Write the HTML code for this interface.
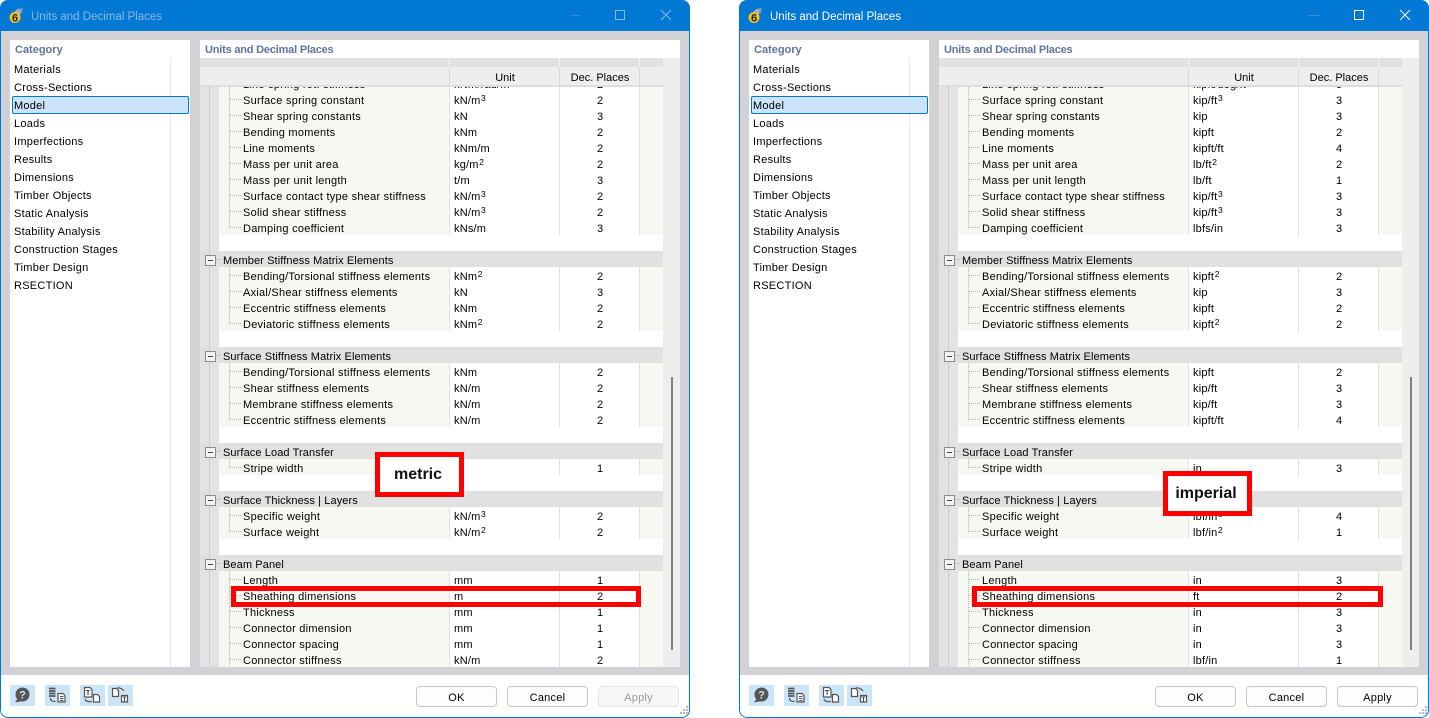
<!DOCTYPE html>
<html><head><meta charset="utf-8"><title>Units and Decimal Places</title>
<style>
*{box-sizing:border-box}
html,body{margin:0;padding:0;width:1429px;height:718px;background:#fff;overflow:hidden;font-family:"Liberation Sans",sans-serif;font-size:11px;color:#000}
.w{position:absolute;top:0;width:690px;height:718px;overflow:hidden;border-radius:8px;background:#d2d1d6}
.a{position:absolute}
.frame{position:absolute;left:0;top:0;width:690px;height:718px;border:1px solid #0078d4;border-radius:8px}
.tb{left:0;top:0;width:690px;height:31px;background:#0078d4}
.tt{left:31px;top:9px;font-size:11.5px;line-height:16px;white-space:nowrap}
.foot{left:0;top:675px;width:690px;height:43px;background:#fff}
.left{left:10px;top:40px;width:180px;height:627px;background:#fff}
.vl{left:160px;top:19px;width:1px;height:608px;background:#e6e6e6}
.cap{color:#62739c;font-weight:bold;font-size:11px;line-height:20px;white-space:nowrap}
.li{position:absolute;left:4px;line-height:20px;height:18px;white-space:nowrap;letter-spacing:.26px}
.sel{left:12px;top:96px;width:177px;height:18px;background:#cce4f9;border:1px solid #0078d4;border-radius:2px}
.right{left:200px;top:40px;width:480px;height:627px;background:#fff}
.strip{left:0;top:18px;width:463px;height:9px;background:#e1e1e1}
.sb{left:463px;top:18px;width:17px;height:609px;background:#eee}
.th{left:471px;top:337px;width:2px;height:273px;background:#808080}
.hd{left:0;top:27px;width:463px;height:20px;background:#eee;border-bottom:2px solid #ddd;line-height:23px}
.hd span{position:absolute;top:0;height:18px;text-align:center}
.sep{top:27px;width:1px;height:18px;background:#d8d8d8}
.sp{top:18px;width:1px;height:9px;background:#f4f4f4}
.tree{position:absolute;left:200px;top:87px;width:463px;height:580px;overflow:hidden;background:#e3e3e3}
.gl{position:absolute;left:9px;top:0;width:1px;height:580px;background:repeating-linear-gradient(#b5b5b5 0 1px,transparent 1px 2px);z-index:1}
.r{position:relative;height:16px;margin-left:19px;background:#f7f8f2;line-height:20px;white-space:nowrap}
.r::before{content:"";position:absolute;left:10px;top:0;width:1px;height:16px;background:repeating-linear-gradient(#b5b5b5 0 1px,transparent 1px 2px)}
.r::after{content:"";position:absolute;left:11px;top:8px;width:11px;height:1px;background:repeating-linear-gradient(90deg,#b5b5b5 0 1px,transparent 1px 2px)}
.r.e::before{height:9px}
.r i,.r em,.r b{position:absolute;top:0;font-style:normal;font-weight:normal;height:16px}
.r i{left:24px;letter-spacing:.25px}
.r em{left:230px;width:110px;padding-left:4px;background:#fff;border-left:1px solid #e1e1e1;letter-spacing:.2px}
.r b{left:340px;width:81px;text-align:center;padding-left:1px;background:#fff;border-left:1px solid #e1e1e1;border-right:1px solid #e1e1e1}
sup{font-size:8.5px;line-height:0;vertical-align:baseline;position:relative;top:-3.5px;margin-left:.5px}
.bl{height:16px;margin-left:19px;background:#fff}
.h{position:relative;height:16px;background:#e1e1e1;line-height:20px;padding-left:23px;white-space:nowrap;letter-spacing:.1px}
.h::before{content:"";position:absolute;left:5px;top:4px;width:9px;height:9px;background:#f2f2f2 linear-gradient(#444,#444) center/5px 1px no-repeat;border:1px solid #8a8a8a;z-index:2}
.h::after{content:"";position:absolute;left:14px;top:8px;width:7px;height:1px;background:repeating-linear-gradient(90deg,#b5b5b5 0 1px,transparent 1px 2px)}
.btn{position:absolute;top:686px;width:81px;height:21px;border:1px solid #c6c6c6;border-radius:4px;background:#fdfdfd;text-align:center;line-height:22px;letter-spacing:.25px}
.dis{background:#f7f7f7;border-color:#e6e6e6;color:#999}
.ib{position:absolute;top:685px;height:21px;width:25px;background:#cce4f7}
.lab{position:absolute;border:5px solid #f00;background:#fff;text-align:center;font-weight:bold;font-size:16px;color:#111;z-index:5;padding-right:3px}
.hl{position:absolute;border:5px solid #f00;z-index:5}
</style></head><body>

<div class="w" style="left:0">
<div class="a tb"></div>
<svg class="a" style="left:8px;top:7px" width="17" height="17" viewBox="0 0 17 17"><path d="M5 6 L9 2 L15 1 L14 6 L9 9Z" fill="#7f94ad"/><path d="M7 5l5-3M8 7l5-3M9 3l3 4" stroke="#c3cfdb" stroke-width=".7"/><circle cx="7" cy="10.500" r="5.500" fill="#f3c318"/><text x="7" y="14.500" font-family="Liberation Sans" font-weight="bold" font-size="11" text-anchor="middle" fill="#222">6</text></svg>
<div class="a tt" style="color:#8ab8e6">Units and Decimal Places</div>
<div class="a" style="left:570px;top:15px;width:10px;height:1px;background:#2a8bdb"></div>
<div class="a" style="left:615px;top:10px;width:10px;height:10px;border:1px solid #80bcec"></div>
<svg class="a" style="left:660px;top:9px" width="12" height="12" viewBox="0 0 12 12"><path d="M1 1L11 11M11 1L1 11" stroke="#80bcec" stroke-width="1"/></svg>
<div class="a left"><div class="a cap" style="left:5px;top:0">Category</div><div class="a vl"></div></div>
<div class="a sel"></div>
<div class="a" style="left:10px;top:40px;width:180px;height:260px">
<div class="li" style="top:20px">Materials</div><div class="li" style="top:38px">Cross-Sections</div><div class="li" style="top:56px">Model</div><div class="li" style="top:74px">Loads</div><div class="li" style="top:92px">Imperfections</div><div class="li" style="top:110px">Results</div><div class="li" style="top:128px">Dimensions</div><div class="li" style="top:146px">Timber Objects</div><div class="li" style="top:164px">Static Analysis</div><div class="li" style="top:182px">Stability Analysis</div><div class="li" style="top:200px">Construction Stages</div><div class="li" style="top:218px">Timber Design</div><div class="li" style="top:236px">RSECTION</div>
</div>
<div class="a right">
<div class="a cap" style="left:5px;top:0;letter-spacing:-.2px">Units and Decimal Places</div>
<div class="a strip"></div><div class="a sb"></div><div class="a th"></div>
<div class="a hd"><span style="left:250px;width:110px">Unit</span><span style="left:360px;width:80px">Dec. Places</span></div>
<div class="a sep" style="left:249px"></div><div class="a sep" style="left:359px"></div><div class="a sep" style="left:439px"></div>
<div class="a sp" style="left:249px"></div><div class="a sp" style="left:359px"></div><div class="a sp" style="left:439px"></div>
</div>
<div class="tree"><div class="gl"></div>
<div class="r" style="margin-top:-12px"><i>Line spring rot. stiffness</i><em>kNm/rad/m</em><b>2</b></div>
<div class="r"><i>Surface spring constant</i><em>kN/m<sup>3</sup></em><b>2</b></div>
<div class="r"><i>Shear spring constants</i><em>kN</em><b>3</b></div>
<div class="r"><i>Bending moments</i><em>kNm</em><b>2</b></div>
<div class="r"><i>Line moments</i><em>kNm/m</em><b>2</b></div>
<div class="r"><i>Mass per unit area</i><em>kg/m<sup>2</sup></em><b>2</b></div>
<div class="r"><i>Mass per unit length</i><em>t/m</em><b>3</b></div>
<div class="r"><i>Surface contact type shear stiffness</i><em>kN/m<sup>3</sup></em><b>2</b></div>
<div class="r"><i>Solid shear stiffness</i><em>kN/m<sup>3</sup></em><b>2</b></div>
<div class="r e"><i>Damping coefficient</i><em>kNs/m</em><b>3</b></div>
<div class="bl"></div>
<div class="h">Member Stiffness Matrix Elements</div>
<div class="r"><i>Bending/Torsional stiffness elements</i><em>kNm<sup>2</sup></em><b>2</b></div>
<div class="r"><i>Axial/Shear stiffness elements</i><em>kN</em><b>3</b></div>
<div class="r"><i>Eccentric stiffness elements</i><em>kNm</em><b>2</b></div>
<div class="r e"><i>Deviatoric stiffness elements</i><em>kNm<sup>2</sup></em><b>2</b></div>
<div class="bl"></div>
<div class="h">Surface Stiffness Matrix Elements</div>
<div class="r"><i>Bending/Torsional stiffness elements</i><em>kNm</em><b>2</b></div>
<div class="r"><i>Shear stiffness elements</i><em>kN/m</em><b>2</b></div>
<div class="r"><i>Membrane stiffness elements</i><em>kN/m</em><b>2</b></div>
<div class="r e"><i>Eccentric stiffness elements</i><em>kN/m</em><b>2</b></div>
<div class="bl"></div>
<div class="h">Surface Load Transfer</div>
<div class="r e"><i>Stripe width</i><em>m</em><b>1</b></div>
<div class="bl"></div>
<div class="h">Surface Thickness | Layers</div>
<div class="r"><i>Specific weight</i><em>kN/m<sup>3</sup></em><b>2</b></div>
<div class="r e"><i>Surface weight</i><em>kN/m<sup>2</sup></em><b>2</b></div>
<div class="bl"></div>
<div class="h">Beam Panel</div>
<div class="r"><i>Length</i><em>mm</em><b>1</b></div>
<div class="r"><i>Sheathing dimensions</i><em>m</em><b>2</b></div>
<div class="r"><i>Thickness</i><em>mm</em><b>1</b></div>
<div class="r"><i>Connector dimension</i><em>mm</em><b>1</b></div>
<div class="r"><i>Connector spacing</i><em>mm</em><b>1</b></div>
<div class="r"><i>Connector stiffness</i><em>kN/m</em><b>2</b></div>
</div>
<div class="a foot"></div>
<div class="ib" style="left:10px"></div><div class="ib" style="left:45px"></div><div class="ib" style="left:80px"></div><div class="ib" style="left:108px"></div>
<svg class="a" style="left:0;top:680px" width="140" height="30" viewBox="0 680 140 30"><circle cx="22.500" cy="694.500" r="7" fill="#555"/><path d="M18 698L15 702.500L23 701Z" fill="#555"/><text x="22.500" y="698.500" font-family="Liberation Sans" font-weight="bold" font-size="11" text-anchor="middle" fill="#cce4f7">?</text><g fill="none" stroke="#555"><path d="M49 688.500h6.500M49 691h6.500M49 693.500h6.500M49 696h6.500" stroke-width="1.700"/><path d="M50.500 698c0 3 2 3.500 5 3.500" stroke-width="1.200"/><path d="M58 693.500h5l2 2v6.500h-7z" fill="#fff" stroke-width="1.200"/><path d="M60 696.500h3.500M60 698.500h3.500M60 700.500h3.500"/><path d="M84.500 687.500h5.500l2 2v7.500h-7.500z" fill="#fff" stroke-width="1.200"/><path d="M93.500 694.500h4l2 2v5.500h-6z" fill="#fff" stroke-width="1.200"/><path d="M85 699c1 2.500 3 3 7 2.500" stroke-width="1.200"/><path d="M112.500 688.500h4l2 2v6h-6z" fill="#fff" stroke-width="1.200"/><path d="M121.500 695.500h6v6.500h-6z" fill="#fff" stroke-width="1.200"/><path d="M117 688c3 -.5 5 .5 7 3" stroke-width="1.200"/></g><text x="88" y="695" font-family="Liberation Sans" font-weight="bold" font-size="7.500" text-anchor="middle" fill="#444">T</text><text x="124.500" y="701.500" font-family="Liberation Sans" font-weight="bold" font-size="7" text-anchor="middle" fill="#444">T</text></svg>
<div class="btn" style="left:416px">OK</div><div class="btn" style="left:507px">Cancel</div><div class="btn dis" style="left:598px">Apply</div>
<svg class="a" style="left:678px;top:705px" width="11" height="11" viewBox="0 0 11 11"><path d="M8 1h2v2H8zM5 4h2v2H5zM8 4h2v2H8zM2 7h2v2H2zM5 7h2v2H5zM8 7h2v2H8z" fill="#bbb"/></svg>
<div class="lab" style="left:375px;top:452px;width:89px;height:45px;line-height:36px">metric</div>
<div class="hl" style="left:231px;top:586px;width:410px;height:21px"></div>
<div class="frame"></div>
</div>

<div class="w" style="left:739px">
<div class="a tb"></div>
<svg class="a" style="left:8px;top:7px" width="17" height="17" viewBox="0 0 17 17"><path d="M5 6 L9 2 L15 1 L14 6 L9 9Z" fill="#7f94ad"/><path d="M7 5l5-3M8 7l5-3M9 3l3 4" stroke="#c3cfdb" stroke-width=".7"/><circle cx="7" cy="10.500" r="5.500" fill="#f3c318"/><text x="7" y="14.500" font-family="Liberation Sans" font-weight="bold" font-size="11" text-anchor="middle" fill="#222">6</text></svg>
<div class="a tt" style="color:#fff">Units and Decimal Places</div>
<div class="a" style="left:570px;top:15px;width:10px;height:1px;background:#3a93dc"></div>
<div class="a" style="left:615px;top:10px;width:10px;height:10px;border:1px solid #fff"></div>
<svg class="a" style="left:660px;top:9px" width="12" height="12" viewBox="0 0 12 12"><path d="M1 1L11 11M11 1L1 11" stroke="#fff" stroke-width="1"/></svg>
<div class="a left"><div class="a cap" style="left:5px;top:0">Category</div><div class="a vl"></div></div>
<div class="a sel"></div>
<div class="a" style="left:10px;top:40px;width:180px;height:260px">
<div class="li" style="top:20px">Materials</div><div class="li" style="top:38px">Cross-Sections</div><div class="li" style="top:56px">Model</div><div class="li" style="top:74px">Loads</div><div class="li" style="top:92px">Imperfections</div><div class="li" style="top:110px">Results</div><div class="li" style="top:128px">Dimensions</div><div class="li" style="top:146px">Timber Objects</div><div class="li" style="top:164px">Static Analysis</div><div class="li" style="top:182px">Stability Analysis</div><div class="li" style="top:200px">Construction Stages</div><div class="li" style="top:218px">Timber Design</div><div class="li" style="top:236px">RSECTION</div>
</div>
<div class="a right">
<div class="a cap" style="left:5px;top:0;letter-spacing:-.2px">Units and Decimal Places</div>
<div class="a strip"></div><div class="a sb"></div><div class="a th"></div>
<div class="a hd"><span style="left:250px;width:110px">Unit</span><span style="left:360px;width:80px">Dec. Places</span></div>
<div class="a sep" style="left:249px"></div><div class="a sep" style="left:359px"></div><div class="a sep" style="left:439px"></div>
<div class="a sp" style="left:249px"></div><div class="a sp" style="left:359px"></div><div class="a sp" style="left:439px"></div>
</div>
<div class="tree"><div class="gl"></div>
<div class="r" style="margin-top:-12px"><i>Line spring rot. stiffness</i><em>kipft/deg/ft</em><b>3</b></div>
<div class="r"><i>Surface spring constant</i><em>kip/ft<sup>3</sup></em><b>3</b></div>
<div class="r"><i>Shear spring constants</i><em>kip</em><b>3</b></div>
<div class="r"><i>Bending moments</i><em>kipft</em><b>2</b></div>
<div class="r"><i>Line moments</i><em>kipft/ft</em><b>4</b></div>
<div class="r"><i>Mass per unit area</i><em>lb/ft<sup>2</sup></em><b>2</b></div>
<div class="r"><i>Mass per unit length</i><em>lb/ft</em><b>1</b></div>
<div class="r"><i>Surface contact type shear stiffness</i><em>kip/ft<sup>3</sup></em><b>3</b></div>
<div class="r"><i>Solid shear stiffness</i><em>kip/ft<sup>3</sup></em><b>3</b></div>
<div class="r e"><i>Damping coefficient</i><em>lbfs/in</em><b>3</b></div>
<div class="bl"></div>
<div class="h">Member Stiffness Matrix Elements</div>
<div class="r"><i>Bending/Torsional stiffness elements</i><em>kipft<sup>2</sup></em><b>2</b></div>
<div class="r"><i>Axial/Shear stiffness elements</i><em>kip</em><b>3</b></div>
<div class="r"><i>Eccentric stiffness elements</i><em>kipft</em><b>2</b></div>
<div class="r e"><i>Deviatoric stiffness elements</i><em>kipft<sup>2</sup></em><b>2</b></div>
<div class="bl"></div>
<div class="h">Surface Stiffness Matrix Elements</div>
<div class="r"><i>Bending/Torsional stiffness elements</i><em>kipft</em><b>2</b></div>
<div class="r"><i>Shear stiffness elements</i><em>kip/ft</em><b>3</b></div>
<div class="r"><i>Membrane stiffness elements</i><em>kip/ft</em><b>3</b></div>
<div class="r e"><i>Eccentric stiffness elements</i><em>kipft/ft</em><b>4</b></div>
<div class="bl"></div>
<div class="h">Surface Load Transfer</div>
<div class="r e"><i>Stripe width</i><em>in</em><b>3</b></div>
<div class="bl"></div>
<div class="h">Surface Thickness | Layers</div>
<div class="r"><i>Specific weight</i><em>lbf/in<sup>3</sup></em><b>4</b></div>
<div class="r e"><i>Surface weight</i><em>lbf/in<sup>2</sup></em><b>1</b></div>
<div class="bl"></div>
<div class="h">Beam Panel</div>
<div class="r"><i>Length</i><em>in</em><b>3</b></div>
<div class="r"><i>Sheathing dimensions</i><em>ft</em><b>2</b></div>
<div class="r"><i>Thickness</i><em>in</em><b>3</b></div>
<div class="r"><i>Connector dimension</i><em>in</em><b>3</b></div>
<div class="r"><i>Connector spacing</i><em>in</em><b>3</b></div>
<div class="r"><i>Connector stiffness</i><em>lbf/in</em><b>1</b></div>
</div>
<div class="a foot"></div>
<div class="ib" style="left:10px"></div><div class="ib" style="left:45px"></div><div class="ib" style="left:80px"></div><div class="ib" style="left:108px"></div>
<svg class="a" style="left:0;top:680px" width="140" height="30" viewBox="0 680 140 30"><circle cx="22.500" cy="694.500" r="7" fill="#555"/><path d="M18 698L15 702.500L23 701Z" fill="#555"/><text x="22.500" y="698.500" font-family="Liberation Sans" font-weight="bold" font-size="11" text-anchor="middle" fill="#cce4f7">?</text><g fill="none" stroke="#555"><path d="M49 688.500h6.500M49 691h6.500M49 693.500h6.500M49 696h6.500" stroke-width="1.700"/><path d="M50.500 698c0 3 2 3.500 5 3.500" stroke-width="1.200"/><path d="M58 693.500h5l2 2v6.500h-7z" fill="#fff" stroke-width="1.200"/><path d="M60 696.500h3.500M60 698.500h3.500M60 700.500h3.500"/><path d="M84.500 687.500h5.500l2 2v7.500h-7.500z" fill="#fff" stroke-width="1.200"/><path d="M93.500 694.500h4l2 2v5.500h-6z" fill="#fff" stroke-width="1.200"/><path d="M85 699c1 2.500 3 3 7 2.500" stroke-width="1.200"/><path d="M112.500 688.500h4l2 2v6h-6z" fill="#fff" stroke-width="1.200"/><path d="M121.500 695.500h6v6.500h-6z" fill="#fff" stroke-width="1.200"/><path d="M117 688c3 -.5 5 .5 7 3" stroke-width="1.200"/></g><text x="88" y="695" font-family="Liberation Sans" font-weight="bold" font-size="7.500" text-anchor="middle" fill="#444">T</text><text x="124.500" y="701.500" font-family="Liberation Sans" font-weight="bold" font-size="7" text-anchor="middle" fill="#444">T</text></svg>
<div class="btn" style="left:416px">OK</div><div class="btn" style="left:507px">Cancel</div><div class="btn" style="left:598px">Apply</div>
<svg class="a" style="left:678px;top:705px" width="11" height="11" viewBox="0 0 11 11"><path d="M8 1h2v2H8zM5 4h2v2H5zM8 4h2v2H8zM2 7h2v2H2zM5 7h2v2H5zM8 7h2v2H8z" fill="#bbb"/></svg>
<div class="lab" style="left:424px;top:471px;width:89px;height:45px;line-height:36px">imperial</div>
<div class="hl" style="left:233px;top:586px;width:411px;height:21px"></div>
<div class="frame"></div>
</div>
</body></html>
